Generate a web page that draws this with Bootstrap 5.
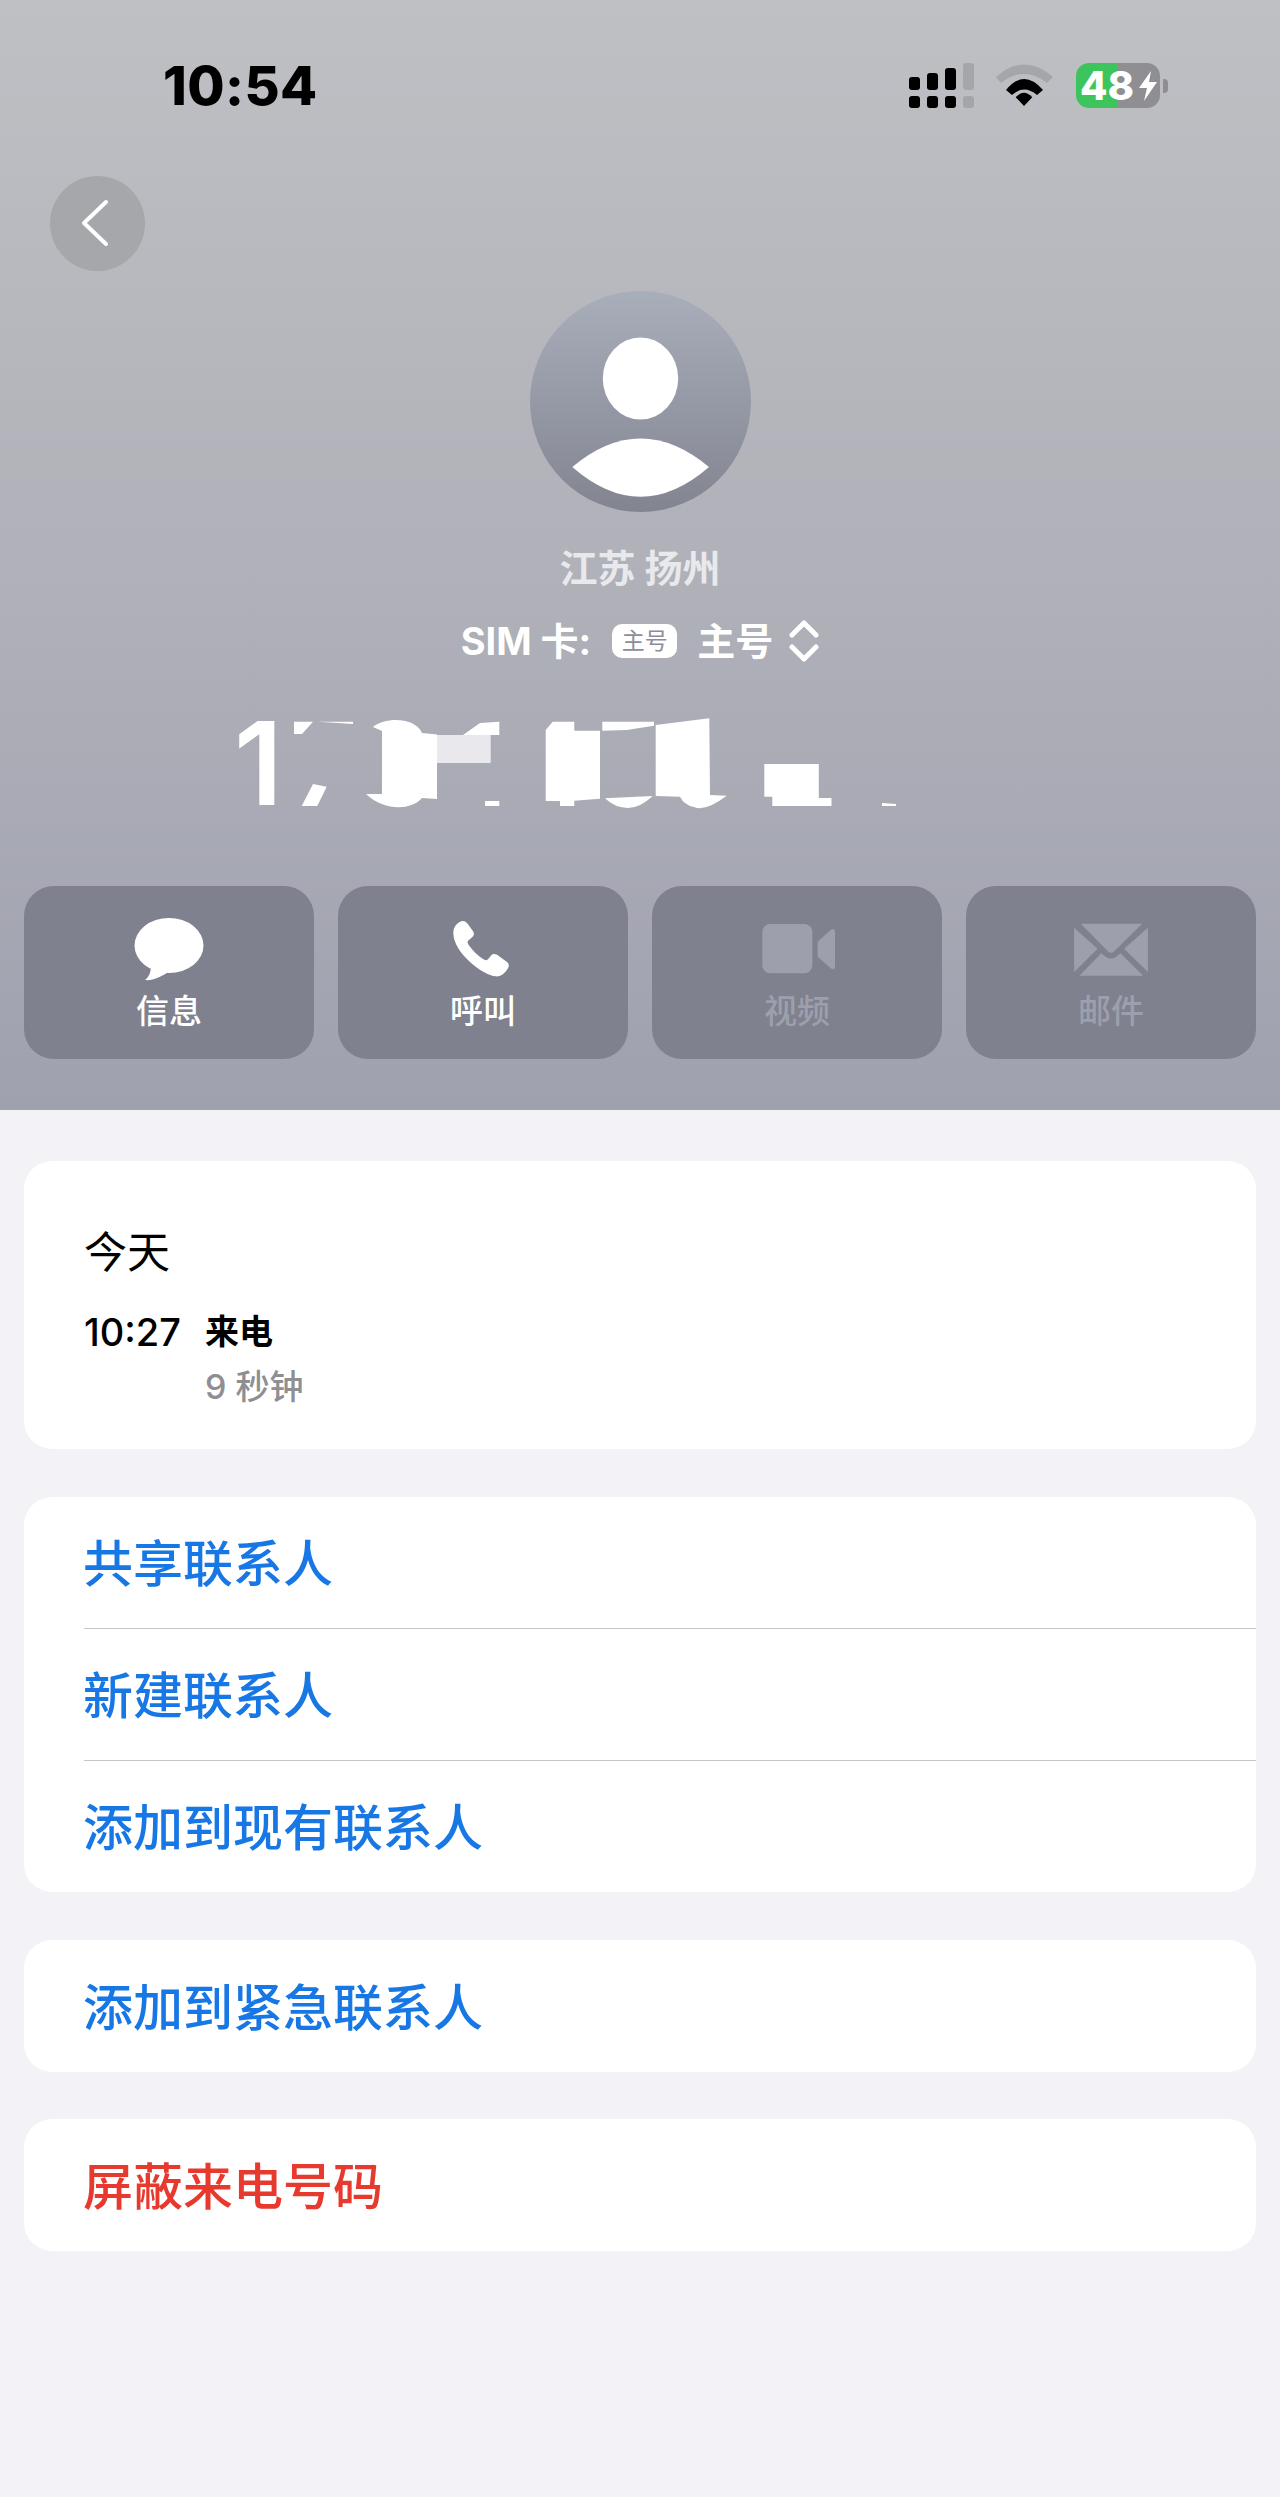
<!DOCTYPE html>
<html lang="zh-CN">
<head>
  <meta charset="UTF-8">
  <meta name="viewport" content="width=device-width, initial-scale=1">
  <title>来电详情</title>
  <link href="https://cdn.jsdelivr.net/npm/bootstrap@5.3.2/dist/css/bootstrap.min.css" rel="stylesheet">
  <style>
    body {
      background-color: #f2f2f7;
      font-family: Inter, "Noto Sans CJK SC", sans-serif;
      min-height: 2497px;
    }
    .call-head {
      height: 1110px;
      background: linear-gradient(180deg, #bfc0c4 0%, #b2b3ba 45%, #9fa1af 100%);
    }
    .status-row {
      padding: 63px 112px 0 163px;
      height: 108px;
    }
    .clock {
      font-size: 54px;
      font-weight: 800;
      line-height: 45px;
      color: #000;
      letter-spacing: 0.4px;
    }
    .wifi-ico {
      margin-left: 22px;
    }
    .batt {
      width: 84px;
      height: 45px;
      margin-left: 23px;
      border-radius: 13px;
      background: linear-gradient(90deg, #3ec45c 49%, #8e8e93 49%);
      color: #fff;
      font-size: 40px;
      font-weight: 800;
      line-height: 45px;
      padding-left: 4px;
    }
    .bolt-ico {
      margin: 0 2px 0 auto;
    }
    .batt-cap {
      width: 5px;
      height: 14px;
      margin-left: 3px;
      background: #8e8e93;
      border-radius: 0 4px 4px 0;
    }
    .back-btn {
      width: 95px;
      height: 95px;
      margin: 68px 0 0 50px;
      background: #a6a7ab;
    }
    .back-ico {
      margin: 0 6px 2px 0;
    }
    .avatar-wrap {
      width: 221px;
      height: 221px;
      margin: 20px auto 0;
    }
    .place {
      margin-top: 31px;
      font-size: 38px;
      font-weight: 700;
      line-height: 50px;
      color: #e8e9ed;
    }
    .sim-row {
      margin-top: 24px;
      height: 48px;
      color: #fff;
      font-size: 38px;
      font-weight: 700;
      line-height: 48px;
    }
    .sim-tag {
      width: 65px;
      height: 34px;
      margin: 0 20px 0 21px;
      background: #fff;
      border-radius: 10px;
      color: #8b8e9a;
      font-size: 23px;
      font-weight: 400;
      line-height: 34px;
    }
    .num-shards {
      margin-top: 35px;
      height: 120px;
    }
    .num-first {
      left: 234px;
      top: 4px;
      font-size: 115px;
      font-weight: 600;
      line-height: 120px;
      color: #fff;
    }
    .action-row {
      margin-top: 66px;
      padding: 0 24px;
      gap: 24px;
    }
    .action-box {
      flex: 1 1 0;
      height: 173px;
      padding-top: 30px;
      background: #7f818f;
      border-radius: 30px;
      color: #fff;
      font-size: 33px;
      font-weight: 500;
      line-height: 48px;
    }
    .action-box.off {
      color: #9d9fad;
    }
    .action-ico {
      height: 66px;
      margin-bottom: 5px;
    }
    .phone-ico {
      margin-right: 3px;
    }
    .video-ico {
      margin-left: 3px;
    }
    .sheet {
      padding: 51px 24px 0;
    }
    .sheet-box {
      background: #fff;
      border: 0;
      border-radius: 28px;
      margin-bottom: 47px;
      overflow: hidden;
    }
    .log-box {
      height: 288px;
      margin-bottom: 48px;
      padding: 60px 60px 0;
    }
    .log-day {
      font-size: 43px;
      line-height: 62px;
      color: #000;
    }
    .log-time {
      width: 121px;
      font-size: 38px;
      font-weight: 500;
      line-height: 50px;
      color: #000;
    }
    .log-kind {
      font-size: 34px;
      font-weight: 700;
      line-height: 50px;
      color: #000;
    }
    .log-len {
      font-size: 34px;
      font-weight: 500;
      line-height: 50px;
      margin-top: 5px;
      color: #8e8e93;
    }
    .log-rows {
      margin-top: 24px;
    }
    .act-line {
      height: 132px;
      padding: 4px 0 0 59px;
      font-size: 50px;
      font-weight: 500;
      color: #1777e5;
    }
    .act-group {
      margin-bottom: 48px;
    }
    .act-group .act-line {
      height: 131px;
    }
    .act-line.danger-line {
      color: #e8392f;
    }
    .act-sep {
      margin-left: 60px;
      border-top: 1.5px solid #c6c6c8;
    }
  </style>
</head>
<body>

<!-- Kopfbereich -->
<header class="call-head">
  <div class="status-row d-flex align-items-center">
    <div class="clock">10:54</div>
    <svg class="ms-auto" width="65" height="45" viewBox="909 63 65 45">
      <rect x="909" y="77" width="11" height="13" rx="3"/>
      <rect x="927" y="73" width="11" height="17" rx="3"/>
      <rect x="945" y="68" width="11" height="22" rx="3"/>
      <rect x="963" y="63" width="11" height="27" rx="3" fill="#a5a6a9"/>
      <rect x="909" y="96" width="11" height="12" rx="3"/>
      <rect x="927" y="96" width="11" height="12" rx="3"/>
      <rect x="945" y="96" width="11" height="12" rx="3"/>
      <rect x="963" y="96" width="11" height="12" rx="3" fill="#a5a6a9"/>
    </svg>
    <svg class="wifi-ico" width="57" height="45" viewBox="996 63 57 45">
      <path fill="#a5a6a9" d="M996,77 Q1024,52 1053,77 L1047,83 Q1024,65 1001,83 Z"/>
      <path d="M1006,90 Q1024,68 1043,90 L1037,95 Q1024,84 1012,95 Z"/>
      <path d="M1015.7,97.3 Q1024,88 1032.3,97.3 L1024,106 Z"/>
    </svg>
    <div class="batt d-flex align-items-center">48<svg class="bolt-ico" width="20" height="30" viewBox="0 0 18 30"><path fill="#fff" d="M12,0 L0,17 L8,17 L5,30 L18,11 L10,11 Z"/></svg></div>
    <div class="batt-cap"></div>
  </div>

  <div class="back-btn rounded-circle d-flex align-items-center justify-content-center">
    <svg class="back-ico" width="30" height="48" viewBox="0 0 30 48"><path d="M26,3 L4,24 L26,45" fill="none" stroke="#fff" stroke-width="4" stroke-linecap="round" stroke-linejoin="round"/></svg>
  </div>

  <div class="avatar-wrap">
    <svg class="d-block" width="221" height="221" viewBox="0 0 221 221">
      <defs>
        <linearGradient id="avaFill" x1="0" y1="0" x2="0" y2="1">
          <stop offset="0" stop-color="#a9aebb"/>
          <stop offset="1" stop-color="#828590"/>
        </linearGradient>
      </defs>
      <circle cx="110.5" cy="110.5" r="110.5" fill="url(#avaFill)"/>
      <ellipse cx="110.5" cy="87.5" rx="37.7" ry="41" fill="#fff"/>
      <path fill="#fff" d="M42.3,176 Q110.5,119 179,176 Q110.5,235.5 42.3,176 Z"/>
    </svg>
  </div>

  <div class="place text-center">江苏 扬州</div>

  <div class="sim-row d-flex justify-content-center align-items-center">
    <span>SIM 卡:</span>
    <span class="sim-tag text-center">主号</span>
    <span>主号</span>
    <svg class="ms-3" width="30" height="42" viewBox="0 0 30 42">
      <path d="M3,15 L15,3 L27,15 M3,27 L15,39 L27,27" fill="none" stroke="#fff" stroke-width="5" stroke-linecap="round" stroke-linejoin="round"/>
    </svg>
  </div>

  <!-- Nummer ist im Original geschwaerzt, nur Reste sichtbar -->
  <div class="num-shards position-relative">
    <svg class="d-block" width="1280" height="120" viewBox="0 700 1280 120">
      <g fill="#fff">
        <path d="M294,721.7 L313,721.7 L302,734 L294,734 Z"/>
        <path d="M317,721.7 L353,721.7 L353,724 L330,722.5 Z"/>
        <path d="M313,784 L326.7,786.7 L317.3,806 L301.7,806 Z"/>
        <path d="M373,727 C385,717 415,717 422,733 L437,734.5 L437,799 L422,798 C412,810 385,812 366,794 L382,794 L382,731 Z"/>
        <path d="M463,735 L480,723 L499.3,721.7 L499.3,735 Z"/>
        <rect x="485" y="801" width="14.3" height="5"/>
        <path d="M545.7,730 L552.7,721.7 L574.3,721.7 L574.3,730.7 L600,730.7 L600,798.7 L574.3,800.7 L574.3,806 L560,806 L560,801 L545.7,801 Z"/>
        <path d="M602.3,721.7 L654,721.7 L654,725.7 L626.7,730 L602.3,730.7 Z"/>
        <path d="M655.7,725 L709.3,718.3 L710,795 L726.7,795.7 Q705,812 694,807 Q684,805 680,796.7 L655.7,796 Z"/>
        <path d="M605,798.3 L652.7,796 Q640,808 628,808 Q615,808 605,798.3 Z"/>
        <path d="M764.3,764 L818.8,764 L818.8,798 L831.5,798 L831.5,806 L772.3,806 L772.3,796.7 L764.3,796.7 Z"/>
        <path d="M882,803 L896,804 L896,806 L882,806 Z"/>
      </g>
      <rect x="437" y="735" width="53.7" height="28" fill="#e9e9ed"/>
    </svg>
    <span class="num-first position-absolute">1</span>
  </div>

  <div class="action-row d-flex">
    <div class="action-box d-flex flex-column align-items-center">
      <div class="action-ico d-flex align-items-center justify-content-center">
        <svg width="70" height="66" viewBox="0 0 70 66">
          <ellipse cx="35" cy="29.5" rx="34.5" ry="27.5" fill="#fff"/>
          <path fill="#fff" d="M17,50 C17,57 14,62 11,64 C18,65 27,61 34,56 Z"/>
        </svg>
      </div>
      <span>信息</span>
    </div>
    <div class="action-box d-flex flex-column align-items-center">
      <div class="action-ico d-flex align-items-center justify-content-center">
        <svg class="phone-ico" width="63" height="63" viewBox="1050 55 190 190">
          <path fill="#fff" d="M1078,68 C1090,60 1098,66 1106,76 L1120,96 C1124,104 1122,110 1116,114 L1106,122 C1102,126 1102,130 1106,136 C1118,154 1134,170 1152,180 C1158,183 1162,183 1166,178 L1174,168 C1178,163 1184,162 1192,166 L1220,186 C1228,192 1230,200 1224,208 C1214,224 1202,232 1188,231 C1150,228 1060,160 1060,100 C1060,86 1066,76 1078,68 Z"/>
        </svg>
      </div>
      <span>呼叫</span>
    </div>
    <div class="action-box off d-flex flex-column align-items-center">
      <div class="action-ico d-flex align-items-center justify-content-center">
        <svg class="video-ico" width="74" height="50" viewBox="127 72 220 150">
          <rect x="127" y="72" width="150" height="148" rx="24" fill="#9d9fad"/>
          <path fill="#9d9fad" d="M293,125 L332,90 Q345,82 345,98 L345,197 Q345,213 332,205 L293,170 Z"/>
        </svg>
      </div>
      <span>视频</span>
    </div>
    <div class="action-box off d-flex flex-column align-items-center">
      <div class="action-ico d-flex align-items-center justify-content-center">
        <svg width="74" height="53" viewBox="1062 68 220 158">
          <g fill="#9d9fad">
            <path d="M1082,70 L1265,70 L1180,154 Q1172,160 1164,154 Z"/>
            <path d="M1062,82 L1132,145 L1062,214 Z"/>
            <path d="M1282,82 L1211,145 L1282,214 Z"/>
            <path d="M1078,225 L1143,158 L1158,170 Q1172,178 1186,170 L1200,158 L1268,225 Z"/>
          </g>
        </svg>
      </div>
      <span>邮件</span>
    </div>
  </div>
</header>

<!-- Listen -->
<main class="sheet">
  <section class="sheet-box log-box">
    <div class="log-day">今天</div>
    <div class="log-rows d-flex">
      <div class="log-time">10:27</div>
      <div>
        <div class="log-kind">来电</div>
        <div class="log-len">9 秒钟</div>
      </div>
    </div>
  </section>

  <section class="sheet-box act-group">
    <div class="act-line d-flex align-items-center">共享联系人</div>
    <div class="act-sep"></div>
    <div class="act-line d-flex align-items-center">新建联系人</div>
    <div class="act-sep"></div>
    <div class="act-line d-flex align-items-center">添加到现有联系人</div>
  </section>

  <section class="sheet-box">
    <div class="act-line d-flex align-items-center">添加到紧急联系人</div>
  </section>

  <section class="sheet-box">
    <div class="act-line danger-line d-flex align-items-center">屏蔽来电号码</div>
  </section>
</main>

<script src="https://cdn.jsdelivr.net/npm/bootstrap@5.3.2/dist/js/bootstrap.bundle.min.js"></script>
</body>
</html>
